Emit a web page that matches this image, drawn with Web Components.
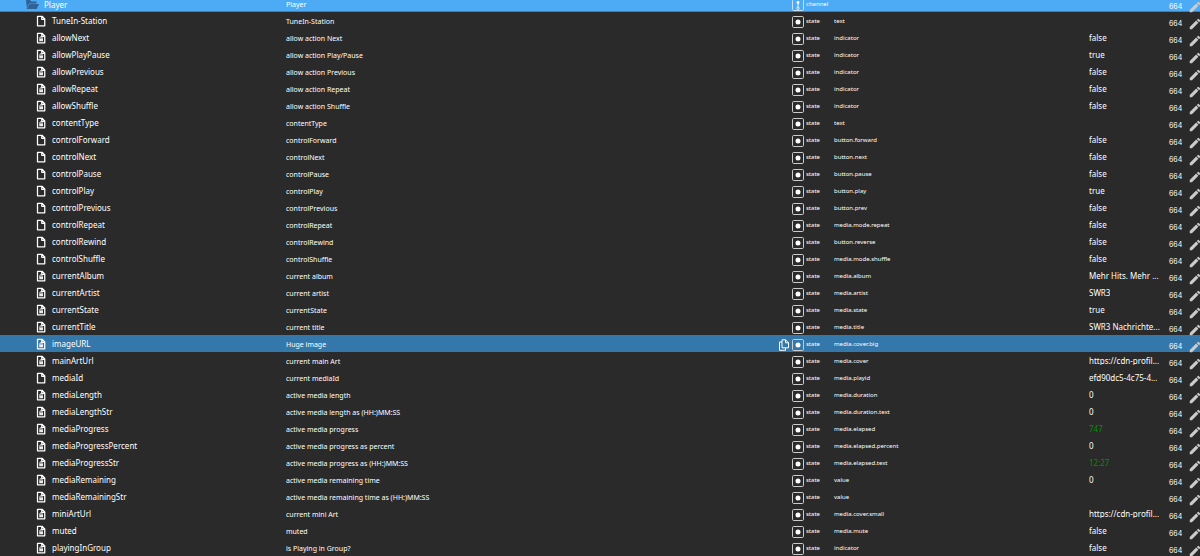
<!DOCTYPE html>
<html lang="en">
<head>
<meta charset="utf-8">
<title>Objects</title>
<style>
html, body { margin: 0; background: #2a2a2a; }
body { overflow: hidden; }
</style>
</head>
<body>
<object-browser></object-browser>

<template id="icon-tpl">
<style>
:host { display: inline-flex; flex: none; width: 12px; height: 12px; }
svg { width: 100%; height: 100%; display: block; }
</style>
</template>

<template id="browser-tpl">
<style>
:host { display: block; overflow: hidden; color: #fff; font: 8px/9px "Noto Sans", sans-serif; }
table { width: 100%; table-layout: fixed; border-collapse: collapse; margin-top: -5px; }
.c-id { width: 286px; }
.c-type { width: 42px; }
.c-role { width: 255px; }
.c-value { width: 80px; }
.c-acl { width: 19px; }
.c-edit { width: 12px; }
tr { height: 17px; }
td, th { padding: 0; font-weight: 400; text-align: left; vertical-align: middle; white-space: nowrap; height: 17px; }
.cell { box-sizing: border-box; display: flex; align-items: center; height: 17px; padding-top: 2px; }
.id { padding-left: 35px; gap: 5px; font-size: 8px; }
.state .id, .state .value { padding-top: 0; }
.channel .id { padding-left: 25px; }
.channel .id object-icon { width: 14px; height: 14px; }
.name { font-size: 7px; justify-content: space-between; }
.type, .role { font-size: 6px; }
.type { gap: 2px; }
.value { font-size: 8px; }
.value span { overflow: hidden; text-overflow: ellipsis; }
.changed { color: #009000; }
.acl { font: 7px/9px Inter, sans-serif; padding-top: 6px; }
.edit { padding-top: 6px; }
.edit object-icon { width: 14px; height: 14px; }
button { display: inline-flex; flex: none; padding: 0; border: 0; background: none; color: inherit; cursor: pointer; }
.copy { margin-right: 2px; }
.channel { background: #4dabf5; box-shadow: inset 0 -1px #3b82ba; }
.selected { background: #3477ab; }
</style>
<table aria-label="Objects">
<colgroup><col class="c-id"><col><col class="c-type"><col class="c-role"><col class="c-value"><col class="c-acl"><col class="c-edit"></colgroup>
<tbody></tbody>
</table>
</template>

<script>
const ICONS = {
  folder: ['0 0 14 14', '<path fill="#2f6296" d="M1 2h4l1.300 1.500H11.500v2H4L1.800 10z"/><path fill="#2f6296" d="M4.500 6H14L11.700 11H1.500z"/>'],
  file: ['0 0 24 24', '<path fill="none" stroke="#fff" stroke-width="2.500" stroke-linejoin="round" d="M14 2.500H5v19h14.500V8zM13.500 2.500V8.500h6"/>'],
  locked: ['0 0 24 24', '<path fill="none" stroke="#fff" stroke-width="2.500" stroke-linejoin="round" d="M14 2.500H5v19h14.500V8zM13.500 2.500V8.500h6"/><path fill="none" stroke="#fff" stroke-width="1.800" d="M9.800 13.500V11.500a2.200 2.200 0 0 1 4.400 0v2"/><path fill="#fff" fill-opacity=".9" d="M8.500 13h7.500v5.500H8.500z"/>'],
  state: ['0 0 12 12', '<rect x=".5" y=".5" width="11" height="11" rx="1.200" fill="none" stroke="#ccc"/><circle cx="6" cy="6" r="2.500" fill="#fff"/>'],
  channel: ['0 0 12 12', '<rect x=".5" y=".5" width="11" height="11" rx="1.200" fill="none" stroke="#c4e2fc"/><path stroke="#fff" stroke-width=".9" d="M6 3.500V9"/><circle cx="6" cy="3.500" r="1.400" fill="#fff"/><circle cx="6" cy="9.300" r="1.200" fill="#4dabf5" stroke="#fff" stroke-width=".8"/>'],
  copy: ['0 0 12 12', '<path fill="none" stroke="#fff" stroke-linejoin="round" d="M7.500 .8H4v8h6.500V3.800zM7.500 .8v3h3M4 3H1.500v8.300h6V9"/>'],
  edit: ['0 0 24 24', '<path fill="#ccc" d="M3 17.250V21h3.750L17.810 9.940l-3.750-3.750zM20.710 7.040a1 1 0 0 0 0-1.410l-2.340-2.340a1 1 0 0 0-1.410 0l-1.830 1.830 3.750 3.750z"/>']
};

class ObjectIcon extends HTMLElement {
  connectedCallback() {
    if (this.shadowRoot) return;
    const root = this.attachShadow({ mode: 'open' });
    root.append(document.getElementById('icon-tpl').content.cloneNode(true));
    const [box, shape] = ICONS[this.getAttribute('name')];
    root.innerHTML += `<svg viewBox="${box}" aria-hidden="true">${shape}</svg>`;
  }
}

// id | name | role | value | icon
const OBJECTS = `TuneIn-Station|TuneIn-Station|text||file
allowNext|allow action Next|indicator|false|locked
allowPlayPause|allow action Play/Pause|indicator|true|locked
allowPrevious|allow action Previous|indicator|false|locked
allowRepeat|allow action Repeat|indicator|false|locked
allowShuffle|allow action Shuffle|indicator|false|locked
contentType|contentType|text||locked
controlForward|controlForward|button.forward|false|file
controlNext|controlNext|button.next|false|file
controlPause|controlPause|button.pause|false|file
controlPlay|controlPlay|button.play|true|file
controlPrevious|controlPrevious|button.prev|false|file
controlRepeat|controlRepeat|media.mode.repeat|false|file
controlRewind|controlRewind|button.reverse|false|file
controlShuffle|controlShuffle|media.mode.shuffle|false|file
currentAlbum|current album|media.album|Mehr Hits. Mehr ...|locked
currentArtist|current artist|media.artist|SWR3|locked
currentState|currentState|media.state|true|locked
currentTitle|current title|media.title|SWR3 Nachrichte...|locked
imageURL|Huge image|media.cover.big||locked
mainArtUrl|current main Art|media.cover|https://cdn-profil...|locked
mediaId|current mediaId|media.playid|efd90dc5-4c75-4...|file
mediaLength|active media length|media.duration|0|locked
mediaLengthStr|active media length as (HH:)MM:SS|media.duration.text|0|locked
mediaProgress|active media progress|media.elapsed|747|locked
mediaProgressPercent|active media progress as percent|media.elapsed.percent|0|locked
mediaProgressStr|active media progress as (HH:)MM:SS|media.elapsed.text|12:27|locked
mediaRemaining|active media remaining time|value|0|locked
mediaRemainingStr|active media remaining time as (HH:)MM:SS|value||locked
miniArtUrl|current mini Art|media.cover.small|https://cdn-profil...|locked
muted|muted|media.mute|false|locked
playingInGroup|is Playing in Group?|indicator|false|locked`.split('\n').map(line => line.split('|'));

const SELECTED = 'imageURL';
const CHANGED = ['mediaProgress', 'mediaProgressStr'];

class ObjectBrowser extends HTMLElement {
  connectedCallback() {
    if (this.shadowRoot) return;
    const root = this.attachShadow({ mode: 'open' });
    root.append(document.getElementById('browser-tpl').content.cloneNode(true));
    root.querySelector('tbody').innerHTML =
      this.row(['Player', 'Player', '', '', 'folder'], 'channel') +
      OBJECTS.map(o => this.row(o, 'state')).join('');
  }
  row([id, name, role, value, icon], type) {
    const selected = id === SELECTED;
    const copy = selected ? '<button class="copy" aria-label="Copy id"><object-icon name="copy"></object-icon></button>' : '';
    return `<tr class="${type}${selected ? ' selected' : ''}">
      <th scope="row"><div class="cell id"><object-icon name="${icon}"></object-icon><span>${id}</span></div></th>
      <td><div class="cell name"><span>${name}</span>${copy}</div></td>
      <td><div class="cell type"><object-icon name="${type}"></object-icon><span>${type}</span></div></td>
      <td><div class="cell role">${role}</div></td>
      <td><div class="cell value${CHANGED.includes(id) ? ' changed' : ''}"><span>${value}</span></div></td>
      <td><div class="cell acl">664</div></td>
      <td><div class="cell edit"><button aria-label="Edit ${id}"><object-icon name="edit"></object-icon></button></div></td>
    </tr>`;
  }
}

customElements.define('object-icon', ObjectIcon);
customElements.define('object-browser', ObjectBrowser);
</script>
</body>
</html>
